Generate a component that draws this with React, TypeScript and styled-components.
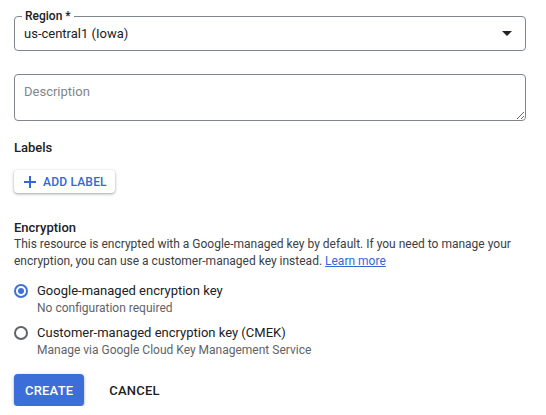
import styled, { createGlobalStyle } from "styled-components";

const GlobalStyle = createGlobalStyle`
  body {
    margin: 0;
    background: #ffffff;
    font-family: Roboto, "Liberation Sans", Arial, sans-serif;
    color: #202124;
  }
`;

const Page = styled.div`
  width: 512px;
  padding: 9px 20px 0 14px;
  display: flex;
  flex-direction: column;
`;

const SelectBox = styled.fieldset`
  margin: 0;
  padding: 0 10px 6px 9px;
  border: 1px solid #80868b;
  border-radius: 4px;
  min-width: 0;
`;

const FloatLabel = styled.legend`
  margin-left: -2px;
  padding: 0 3px;
  font-size: 12px;
  line-height: 14px;
  font-weight: 500;
  color: #202124;
`;

const SelectRow = styled.div`
  display: flex;
  align-items: center;
  justify-content: space-between;
  height: 21px;
  font-size: 13px;
`;

const Arrow = styled.svg`
  width: 10px;
  height: 5px;
  margin-right: 3px;
`;

const TextArea = styled.textarea`
  margin-top: 23px;
  height: 47px;
  box-sizing: border-box;
  padding: 9px 9px;
  border: 1px solid #80868b;
  border-radius: 4px;
  resize: vertical;
  font-family: Roboto, "Liberation Sans", Arial, sans-serif;
  font-size: 13px;
  color: #202124;
  outline: none;

  &::placeholder {
    color: #80868b;
  }
`;

const Heading = styled.div<{ $top: number }>`
  margin-top: ${(p) => p.$top}px;
  font-size: 13px;
  line-height: 17px;
  font-weight: 500;
  color: #202124;
`;

const OutlineButton = styled.button`
  align-self: flex-start;
  margin-top: 14px;
  height: 23px;
  padding: 0 8px 0 10px;
  display: flex;
  align-items: center;
  gap: 7px;
  border: none;
  border-radius: 4px;
  background: #fff;
  box-shadow: 0 1px 2px rgba(60, 64, 67, 0.3), 0 1px 3px 1px rgba(60, 64, 67, 0.15);
  font-family: inherit;
  font-size: 12px;
  font-weight: 500;
  color: #3367d6;
  letter-spacing: 0.2px;
`;

const Paragraph = styled.p`
  margin: 0;
  font-size: 12px;
  line-height: 17px;
  color: #3c4043;
`;

const Link = styled.a`
  color: #3367d6;
  text-decoration: underline;
  text-underline-offset: 1px;
`;

const RadioGroup = styled.div`
  margin-top: 11px;
  display: flex;
  flex-direction: column;
  gap: 7px;
`;

const RadioRow = styled.label`
  display: grid;
  grid-template-columns: 14px 1fr;
  column-gap: 9px;
  align-items: center;
`;

const RadioCircle = styled.span<{ $checked: boolean }>`
  width: 14px;
  height: 14px;
  box-sizing: border-box;
  border-radius: 50%;
  border: 2px solid ${(p) => (p.$checked ? "#3f6fd8" : "#5f6368")};
  display: flex;
  align-items: center;
  justify-content: center;

  &::after {
    content: "";
    width: 6px;
    height: 6px;
    border-radius: 50%;
    background: ${(p) => (p.$checked ? "#3f6fd8" : "transparent")};
  }
`;

const RadioTitle = styled.span`
  font-size: 13px;
  line-height: 19px;
  color: #202124;
`;

const RadioHint = styled.span`
  grid-column: 2;
  font-size: 12px;
  line-height: 16px;
  color: #5f6368;
`;

const Actions = styled.div`
  margin-top: 16px;
  display: flex;
  align-items: center;
  gap: 14px;
`;

const ActionButton = styled.button<{ $primary?: boolean }>`
  height: 32px;
  padding: 0 11px;
  border: none;
  border-radius: 4px;
  font-family: inherit;
  font-size: 13px;
  font-weight: 500;
  letter-spacing: 0.2px;
  background: ${(p) => (p.$primary ? "#3b6ed8" : "transparent")};
  color: ${(p) => (p.$primary ? "#ffffff" : "#202124")};
  box-shadow: ${(p) =>
    p.$primary ? "0 1px 2px rgba(60,64,67,0.3), 0 1px 3px 1px rgba(60,64,67,0.15)" : "none"};
`;

const options = [
  { title: "Google-managed encryption key", hint: "No configuration required", checked: true },
  {
    title: "Customer-managed encryption key (CMEK)",
    hint: "Manage via Google Cloud Key Management Service",
    checked: false,
  },
];

const App = () => {
  return (
    <Page>
      <GlobalStyle />
      <SelectBox>
        <FloatLabel>Region *</FloatLabel>
        <SelectRow>
          <span>us-central1 (Iowa)</span>
          <Arrow viewBox="0 0 10 5">
            <path d="M0 0l5 5 5-5z" fill="#202124" />
          </Arrow>
        </SelectRow>
      </SelectBox>
      <TextArea placeholder="Description" />
      <Heading $top={18}>Labels</Heading>
      <OutlineButton>
        <svg width="12" height="12" viewBox="0 0 12 12">
          <path d="M6 0v12M0 6h12" stroke="#3367d6" strokeWidth="2" />
        </svg>
        ADD LABEL
      </OutlineButton>
      <Heading $top={26}>Encryption</Heading>
      <Paragraph>
        This resource is encrypted with a Google-managed key by default. If you need to manage your
        encryption, you can use a customer-managed key instead. <Link href="#">Learn more</Link>
      </Paragraph>
      <RadioGroup>
        {options.map((o) => (
          <RadioRow key={o.title}>
            <RadioCircle $checked={o.checked} />
            <RadioTitle>{o.title}</RadioTitle>
            <RadioHint>{o.hint}</RadioHint>
          </RadioRow>
        ))}
      </RadioGroup>
      <Actions>
        <ActionButton $primary>CREATE</ActionButton>
        <ActionButton>CANCEL</ActionButton>
      </Actions>
    </Page>
  );
};

export default App;
